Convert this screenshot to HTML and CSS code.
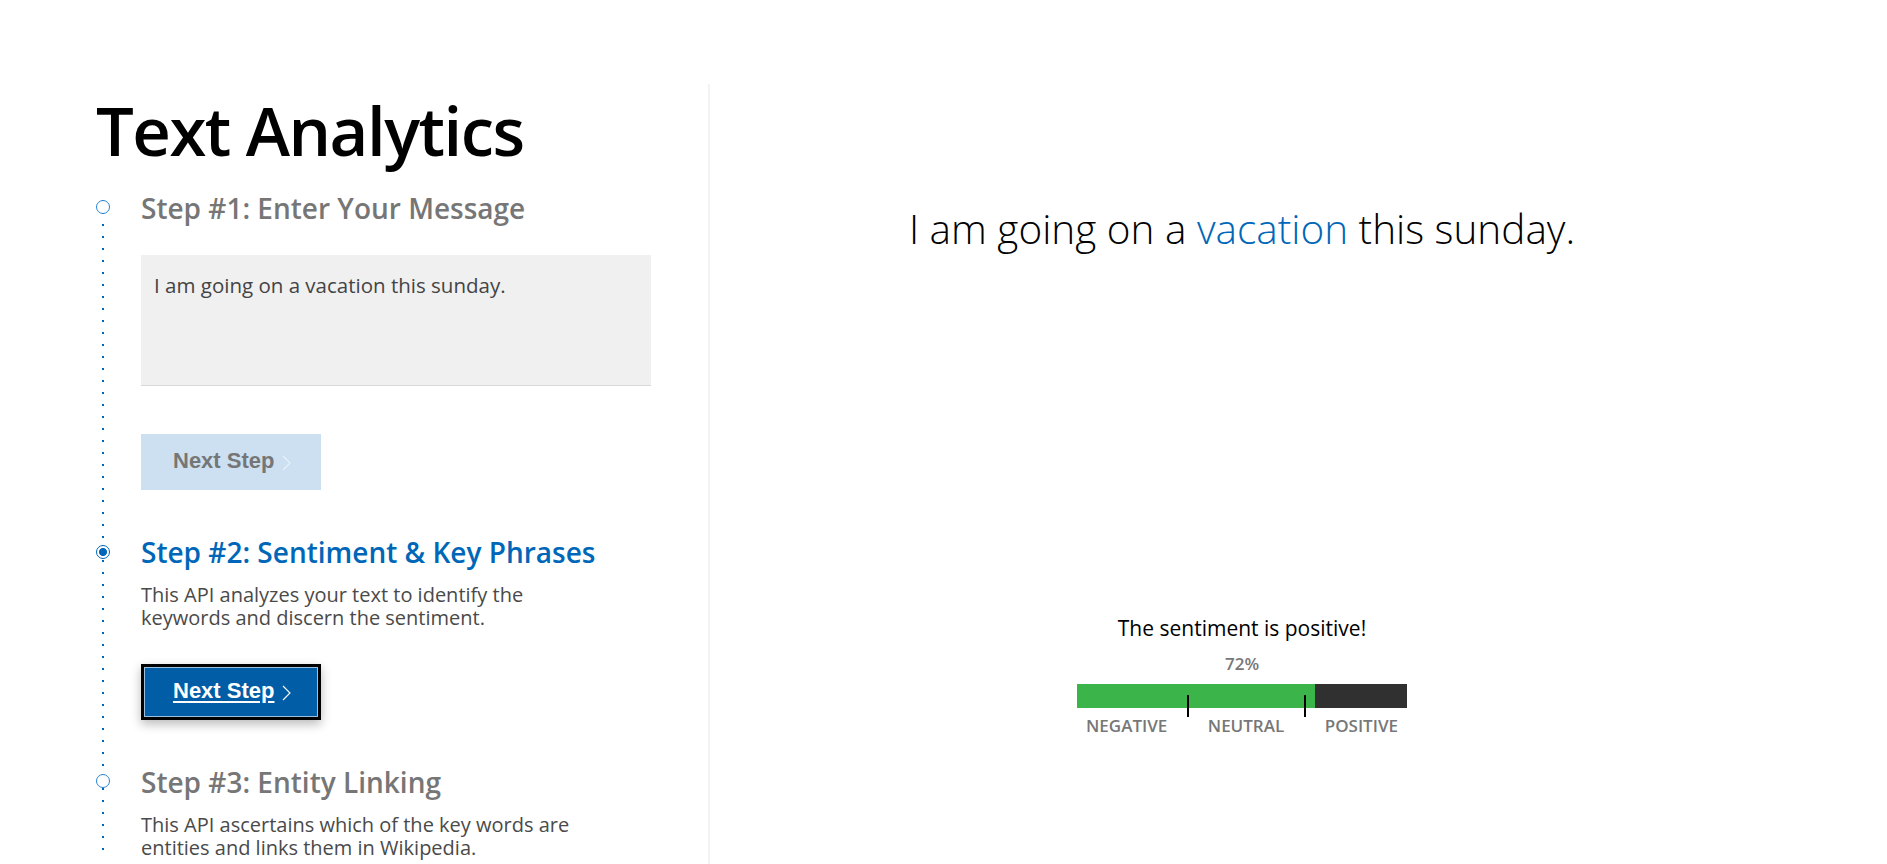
FILE: index.html
```html
<!DOCTYPE html>
<html lang="en">
<head>
<meta charset="utf-8">
<title>Text Analytics</title>
<link rel="stylesheet" href="styles.css">
</head>
<body>
<div class="page">
  <main class="left">
    <h1 class="title">Text Analytics</h1>
    <ol class="steps">
      <li class="step">
        <div class="step-head"><span class="marker"></span><h2 class="step-title">Step #1: Enter Your Message</h2></div>
        <div class="step-body">
          <textarea class="message" readonly>I am going on a vacation this sunday.</textarea>
          <button class="next-btn is-disabled" type="button">Next Step<svg class="chev" width="9" height="16" viewBox="0 0 9 16"><path d="M1 1l7 7-7 7" fill="none" stroke="currentColor" stroke-width="1.1"/></svg></button>
        </div>
      </li>
      <li class="step is-active">
        <div class="step-head"><span class="marker"></span><h2 class="step-title">Step #2: Sentiment &amp; Key Phrases</h2></div>
        <div class="step-body">
          <p class="step-desc">This API analyzes your text to identify the keywords and discern the sentiment.</p>
          <button class="next-btn is-focused" type="button"><span class="btn-label">Next Step</span><svg class="chev" width="9" height="16" viewBox="0 0 9 16"><path d="M1 1l7 7-7 7" fill="none" stroke="currentColor" stroke-width="1.1"/></svg></button>
        </div>
      </li>
      <li class="step">
        <div class="step-head"><span class="marker"></span><h2 class="step-title">Step #3: Entity Linking</h2></div>
        <div class="step-body">
          <p class="step-desc">This API ascertains which of the key words are entities and links them in Wikipedia.</p>
        </div>
      </li>
    </ol>
  </main>
  <section class="right">
    <p class="sentence">I am going on a <span class="kw">vacation</span> this sunday.</p>
    <div class="sentiment">
      <p class="verdict">The sentiment is positive!</p>
      <p class="score">72%</p>
      <div class="meter">
        <div class="meter-fill" style="width:72%"></div>
        <span class="tick tick-1"></span>
        <span class="tick tick-2"></span>
      </div>
      <div class="meter-labels"><span>NEGATIVE</span><span>NEUTRAL</span><span>POSITIVE</span></div>
    </div>
  </section>
</div>
</body>
</html>
```

FILE: styles.css
```css
* { box-sizing: border-box; }
html, body { margin: 0; padding: 0; background: #fff; }
body { font-family: "Open Sans", "Noto Sans", sans-serif; color: #000; overflow: hidden; height: 864px; }

.page {
  display: flex;
  align-items: stretch;
  min-height: 864px;
  padding: 0 113px 0 96px;
}

.left { width: 612px; flex: none; padding-top: 90px; }

.title {
  margin: 0 0 20px;
  font-size: 67px;
  line-height: 80px;
  font-weight: 600;
  letter-spacing: -1.5px;
  color: #000;
}

.steps {
  list-style: none;
  margin: 0;
  padding: 0;
  background-image: linear-gradient(#0067b8 2px, transparent 2px);
  background-size: 2px 12px;
  background-repeat: repeat-y;
  background-position: 6px 10px;
}

.step + .step { margin-top: 44px; }

.step-head { display: flex; align-items: flex-start; }

.marker {
  flex: none;
  width: 14px;
  height: 14px;
  margin: 10px 31px 0 0;
  border: 1px solid #2b83d3;
  border-radius: 50%;
  background: #fff;
}
.is-active .marker {
  margin-top: 11px;
  border-color: #0067b8;
  background: radial-gradient(circle, #0067b8 0 3.6px, #fff 4.4px);
}

.step-title {
  margin: 0;
  font-size: 28px;
  line-height: 36px;
  font-weight: 600;
  color: #767676;
}
.is-active .step-title { color: #0067b8; }

.step-body { padding-left: 45px; }

.message {
  display: block;
  width: 510px;
  height: 131px;
  margin: 29px 0 0;
  padding: 17px 13px;
  border: 0;
  border-bottom: 1px solid #d8d8d8;
  background: #f0f0f0;
  font-family: "Open Sans", sans-serif;
  font-size: 20.5px;
  line-height: 26px;
  color: #444;
  resize: none;
  overflow: hidden;
  outline: none;
}

.step-desc {
  max-width: 440px;
  margin: 13px 0 0;
  font-size: 20px;
  line-height: 23px;
  color: #4a4a4a;
}

.next-btn {
  display: flex;
  align-items: center;
  width: 180px;
  height: 56px;
  margin-top: 48px;
  padding: 0 0 3px 32px;
  border: 0;
  font-family: "Liberation Sans", Arial, sans-serif;
  font-size: 22px;
  font-weight: 700;
  cursor: pointer;
}
.next-btn .chev { margin-left: 8px; margin-top: 4px; }

.next-btn.is-disabled {
  background: #cce0f1;
  color: #767676;
}
.next-btn.is-disabled .chev { color: #e9f1f9; }

.next-btn.is-focused {
  margin-top: 35px;
  padding-left: 29px;
  background: #005da6;
  color: #fff;
  border: 3px solid #000;
  box-shadow: inset 0 0 0 1px #9dbfe0, 0 4px 10px rgba(0, 0, 0, 0.28);
}
.btn-label { text-decoration: underline; text-underline-offset: 3px; }

.right {
  flex: 1;
  margin-top: 84px;
  border-left: 2px solid #f3f3f3;
  padding-top: 120px;
  text-align: center;
}

.sentence {
  margin: 0;
  font-size: 40.5px;
  line-height: 50px;
  font-weight: 300;
  color: #000;
}
.kw { color: #0067b8; }

.sentiment { width: 330px; margin: 361px auto 0; }

.verdict { margin: 0; font-size: 21px; line-height: 26px; color: #000; }

.score {
  margin: 13px 0 0;
  font-size: 17px;
  line-height: 20px;
  font-weight: 600;
  color: #777;
}

.meter {
  position: relative;
  height: 24px;
  margin-top: 10px;
  background: #303030;
}
.meter-fill { height: 100%; background: #3bb44a; }
.tick {
  position: absolute;
  top: 11px;
  width: 2px;
  height: 22px;
  background: #000;
}
.tick-1 { left: 110px; }
.tick-2 { left: 227px; }

.meter-labels {
  display: flex;
  justify-content: space-between;
  margin-top: 8px;
  padding: 0 9px;
  font-size: 17px;
  line-height: 20px;
  font-weight: 600;
  color: #777;
}
```
